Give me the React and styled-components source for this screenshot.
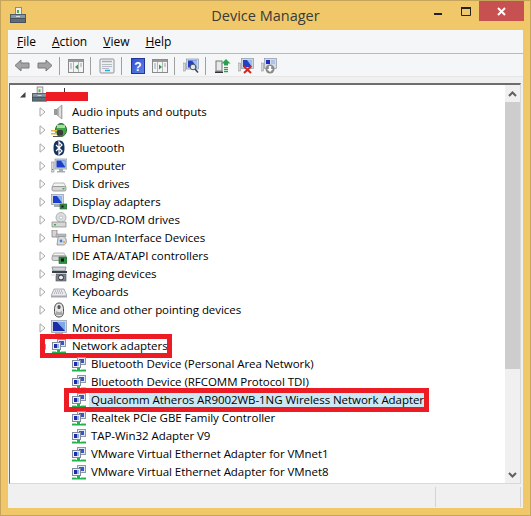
import React from 'react'
import styled, { createGlobalStyle } from 'styled-components'

const Global = createGlobalStyle`
  html, body { margin: 0; padding: 0; background: #f0c869; }
  * { box-sizing: border-box; }
`

const Win = styled.div`
  width: 531px;
  height: 516px;
  display: flex;
  flex-direction: column;
  background: #f0c869;
  border: 1px solid #c4a55b;
  font-family: "Open Sans", "Noto Sans", sans-serif;
  font-size: 11.5px;
  color: #000;
  overflow: hidden;
`

const TitleBar = styled.div`
  height: 29px;
  flex: none;
  display: grid;
  grid-template-columns: 1fr auto 1fr;
  align-items: start;
`

const AppIcon = styled.div`
  margin: 6px 0 0 9px;
  display: flex;
`

const Title = styled.div`
  font-size: 14.5px;
  line-height: 20px;
  margin-top: 5px;
  color: #3a3a3a;
`

const WinButtons = styled.div`
  justify-self: end;
  margin-right: 6px;
  display: flex;
  align-items: flex-start;
`

const WinBtn = styled.div`
  width: ${p => p.$w}px;
  height: 20px;
  display: flex;
  align-items: center;
  justify-content: center;
  background: ${p => p.$close ? '#c75050' : 'transparent'};
`

const Client = styled.div`
  flex: 1;
  margin: 0 7px 7px 7px;
  display: flex;
  flex-direction: column;
  background: #f0f0f0;
  min-height: 0;
`

const MenuBar = styled.div`
  height: 24px;
  flex: none;
  display: flex;
  align-items: center;
  padding-left: 9px;
  gap: 16px;
  background: #f5f6f7;
  border-bottom: 1px solid #b9b9b9;
  font-size: 12px;
  u { text-underline-offset: 1px; }
`

const ToolBar = styled.div`
  height: 22px;
  flex: none;
  display: flex;
  align-items: center;
  padding: 1px 0 0 2px;
  background: #f5f6f7;
`

const ToolBtn = styled.div`
  width: ${p => p.$w || 22}px;
  height: 20px;
  display: flex;
  align-items: center;
  justify-content: center;
`

const Sep = styled.div`
  width: 1px;
  height: 18px;
  background: #a0a0a0;
  margin: 0 5px 0 3px;
`

const Strip = styled.div`
  height: 7px;
  flex: none;
  background: #f0f0f0;
  border-top: 1px solid #e6e6e6;
`

const Body = styled.div`
  flex: 1;
  display: flex;
  min-height: 0;
  margin: 0 2px 0 1px;
  background: #fff;
  border-top: 2px solid #6d6d6d;
  border-left: 1px solid #6d6d6d;
  border-bottom: 1px solid #d9d9d9;
  border-right: 1px solid #d9d9d9;
`

const Tree = styled.div`
  flex: 1;
  overflow: hidden;
  display: flex;
  flex-direction: column;
`

const Row = styled.div`
  height: 18px;
  flex: none;
  display: flex;
  align-items: center;
  padding-left: ${p => p.$indent}px;
  position: relative;
`

const Arrow = styled.div`
  width: 16px;
  height: 18px;
  flex: none;
  padding-right: ${p => p.$nudge || 0}px;
  display: flex;
  align-items: center;
  justify-content: center;
`

const IconSlot = styled.div`
  width: 16px;
  height: 16px;
  flex: none;
  margin-left: ${p => p.$ml || 0}px;
  margin-right: ${p => p.$mr ?? 3}px;
  display: flex;
`

const Label = styled.div`
  white-space: nowrap;
  line-height: 16px;
  padding: 0 2px;
  letter-spacing: -0.05px;
  background: ${p => p.$selected ? '#cce8f4' : 'transparent'};
`

const Mark = styled.div`
  position: absolute;
  left: ${p => p.$left}px;
  top: -3px;
  width: ${p => p.$w}px;
  height: 24px;
  border: 5px solid #ed1c24;
  pointer-events: none;
`

const Redaction = styled.div`
  position: absolute;
  left: 36px;
  top: 7px;
  width: 42px;
  height: 9px;
  background: #ed1c24;
  &::before {
    content: "";
    position: absolute;
    left: 18px;
    top: -4px;
    width: 1px;
    height: 4px;
    background: #333;
  }
`

const Scrollbar = styled.div`
  width: 15px;
  flex: none;
  display: flex;
  flex-direction: column;
  background: #f0f0f0;
`

const ScrollBtn = styled.div`
  height: 17px;
  flex: none;
  display: flex;
  align-items: center;
  justify-content: center;
`

const Thumb = styled.div`
  height: 267px;
  flex: none;
  background: #cdcdcd;
`

const ScrollGap = styled.div`
  flex: 1;
`

const StatusBar = styled.div`
  height: 24px;
  flex: none;
  display: flex;
  padding: 3px 0 1px;
  background: #f0f0f0;
`

const StatusCell = styled.div`
  flex: ${p => p.$grow ? 1 : 'none'};
  width: ${p => p.$w ? p.$w + 'px' : 'auto'};
  border-right: ${p => p.$last ? 'none' : '1px solid #d4d4d4'};
`

const Svg = ({ children, size = 16, w, h }) => (
  <svg width={w || size} height={h || size} viewBox={`0 0 ${w || size} ${h || size}`} style={{ display: 'block' }}>{children}</svg>
)

const NetIcon = () => (
  <Svg>
    <rect x="6.500" y="1.500" width="8" height="7" fill="#dfe8f6" stroke="#8d97a8" />
    <rect x="8" y="3" width="5" height="4" fill="#3a52cc" />
    <rect x="1.500" y="4.500" width="8" height="7" fill="#eef2f8" stroke="#7f8a9c" />
    <rect x="3" y="6" width="5" height="4" fill="#1c2cac" />
    <rect x="6" y="6" width="2" height="4" fill="#8fb0e8" />
    <rect x="6" y="12" width="3" height="2" fill="#22b14c" />
    <rect x="1" y="14" width="14" height="1.500" fill="#22b14c" />
    <path d="M1 13h4v1H1zM10 13h5v1h-5z" fill="#bfc5cc" />
  </Svg>
)

const SpeakerIcon = () => (
  <Svg>
    <rect x="3" y="5" width="3" height="6" fill="#9a9a9a" />
    <path d="M6 5l5-4v14l-5-4z" fill="#b5b5b5" stroke="#8b8b8b" strokeWidth=".6" />
    <path d="M8 4l2-1.500v11L8 12z" fill="#e0e0e0" />
  </Svg>
)

const BatteryIcon = () => (
  <Svg>
    <ellipse cx="10" cy="8" rx="5.500" ry="6.500" fill="#3fa648" stroke="#2e6b34" />
    <path d="M6 3h8v3H6z" fill="#a6dfa0" />
    <rect x="6" y="8" width="6" height="5.500" rx="1.500" fill="#3a3a3a" />
    <path d="M0 8h6v1.500H0zM0 11h6v1.500H0z" fill="#e2b93b" />
    <path d="M2 14h7v1H2z" fill="#555" />
  </Svg>
)

const BluetoothIcon = () => (
  <Svg>
    <path d="M8 .5c4 0 5.500 2.500 5.500 7.500S12 15.500 8 15.500 2.500 13 2.500 8 4 .5 8 .5z" fill="#15315f" />
    <path d="M5 5l6 6-3 3V2l3 3-6 6" fill="none" stroke="#fff" strokeWidth="1.200" />
  </Svg>
)

const ComputerIcon = () => (
  <Svg>
    <rect x="0" y="4" width="3" height="10" fill="#d8d8d8" stroke="#8b8b8b" strokeWidth=".6" />
    <rect x="1" y="11" width="1" height="1" fill="#35a04a" />
    <rect x="4" y="1" width="12" height="10" fill="#cfd6df" stroke="#8e98a6" strokeWidth=".7" />
    <rect x="5.500" y="2.500" width="9" height="7" fill="#1d3fc8" />
    <path d="M10 2.500h4.500v7z" fill="#8fb7ee" />
    <path d="M8 11h4v2H8zM6 13h8v1.500H6z" fill="#a5abb3" />
  </Svg>
)

const DiskIcon = () => (
  <Svg>
    <path d="M3 7h10l2 4H1z" fill="#f2f2f2" stroke="#9c9c9c" strokeWidth=".7" />
    <rect x="1" y="10.500" width="14" height="4.500" rx="1.500" fill="#d6d6d6" stroke="#7f7f7f" strokeWidth=".7" />
    <rect x="11.500" y="12" width="2" height="1.500" fill="#34b24c" />
  </Svg>
)

const DisplayIcon = () => (
  <Svg>
    <rect x="0.500" y="0.500" width="12" height="10" fill="#cfd6df" stroke="#8e98a6" strokeWidth=".7" />
    <rect x="2" y="2" width="9" height="7" fill="#1d3fc8" />
    <path d="M6 2h5v7z" fill="#8fb7ee" />
    <path d="M3 11h8v2H3z" fill="#a5abb3" />
    <rect x="9" y="10" width="7" height="5" fill="#3c8a4a" stroke="#2b5f35" strokeWidth=".6" />
    <rect x="10.500" y="11.500" width="2" height="2" fill="#111" />
  </Svg>
)

const DvdIcon = () => (
  <Svg>
    <circle cx="10" cy="5.500" r="5" fill="#d9dde0" stroke="#9a9a9a" strokeWidth=".7" />
    <circle cx="10" cy="5.500" r="1.500" fill="#fff" stroke="#999" strokeWidth=".5" />
    <path d="M1 10h14v5H1z" fill="#d6d6d6" stroke="#7f7f7f" strokeWidth=".7" />
    <rect x="3" y="12" width="2" height="1.500" fill="#34b24c" />
  </Svg>
)

const HidIcon = () => (
  <Svg>
    <path d="M1 0h5v7H1z" fill="#d6d6d6" stroke="#777" strokeWidth=".7" />
    <path d="M5 4h10v3H5z" fill="#bbb" stroke="#888" strokeWidth=".5" />
    <path d="M7 7c3-1 7-1 8 2s0 6-3 6H6z" fill="#d9dbdf" stroke="#7b7f88" strokeWidth=".7" />
    <circle cx="10" cy="11" r="1.400" fill="#3e7fd0" />
    <circle cx="13" cy="12" r="1" fill="#d8a23a" />
  </Svg>
)

const IdeIcon = () => (
  <Svg>
    <path d="M3 5h10l2 3H1z" fill="#f2f2f2" stroke="#9c9c9c" strokeWidth=".7" />
    <rect x="1" y="8" width="14" height="4.500" rx="1.500" fill="#d6d6d6" stroke="#7f7f7f" strokeWidth=".7" />
    <rect x="8" y="9" width="8" height="6.500" fill="#2f8f44" stroke="#1e5f2e" strokeWidth=".6" />
    <rect x="10" y="10.500" width="3" height="3" fill="#111" />
  </Svg>
)

const ImagingIcon = () => (
  <Svg>
    <path d="M1 1h14l-1 4H2z" fill="#cdd2d8" stroke="#70767e" strokeWidth=".7" />
    <path d="M1 5h15v2H1z" fill="#3b4048" />
    <rect x="5" y="8" width="10" height="7" fill="#7d838b" stroke="#4d5158" strokeWidth=".6" />
    <circle cx="10" cy="11.500" r="2.500" fill="#e8ecf0" stroke="#2a2e33" />
    <path d="M0 8h5v2H0z" fill="#e8e8e8" />
  </Svg>
)

const KeyboardIcon = () => (
  <Svg>
    <path d="M3 5h10l3 7H0z" fill="#e9eaec" stroke="#8c8f95" strokeWidth=".7" />
    <path d="M4 7h8M3 9h10" stroke="#8a8f98" strokeWidth="1" strokeDasharray="1 1" />
    <path d="M0 12h16v1.500H0z" fill="#a5a8ae" />
  </Svg>
)

const MouseIcon = () => (
  <Svg>
    <path d="M8 1c3.500 0 4.500 3 4.500 7s-.5 7-4.500 7-4.500-3-4.500-7S4.500 1 8 1z" fill="#e5e5e5" stroke="#4a4a4a" />
    <rect x="6.500" y="3" width="3" height="4" rx="1.500" fill="#555" />
    <path d="M5 9c2 1.500 4 1.500 6 0v4H5z" fill="#a8a8a8" />
  </Svg>
)

const MonitorIcon = () => (
  <Svg>
    <rect x="0.500" y="0.500" width="15" height="12" fill="#cfd6df" stroke="#8e98a6" strokeWidth=".7" />
    <rect x="2" y="2" width="12" height="9" fill="#1d2fa8" />
    <path d="M6 2h8v9z" fill="#7ea8ea" />
    <path d="M4 13h8v2H4z" fill="#a5abb3" />
  </Svg>
)

const ClippedIcon = () => (
  <Svg>
    <rect x="2" y="1" width="8" height="6" fill="#c9c9c9" />
  </Svg>
)

const ComputerRootIcon = () => (
  <Svg size={17}>
    <rect x="5.500" y="0.500" width="6" height="7" fill="#eee" stroke="#8c8c8c" />
    <path d="M7 3h2v3H7z" fill="#58a848" />
    <rect x="0.500" y="7.500" width="15" height="4" fill="#8896a3" stroke="#4f5b66" />
    <rect x="0.500" y="11.500" width="15" height="4" fill="#5f6d7a" stroke="#46515b" />
    <path d="M6 9h4v1H6z" fill="#d5dbe0" />
  </Svg>
)

const ClosedArrow = () => (
  <Svg w={7} h={10}>
    <path d="M1 .8L6 5l-5 4.200z" fill="#fff" stroke="#a6a6a6" />
  </Svg>
)

const OpenArrow = () => (
  <Svg w={7} h={7}>
    <path d="M6.500 1v5.500H1z" fill="#404040" />
  </Svg>
)

const GreyArrow = ({ flip }) => (
  <Svg w={16} h={13}>
    <path
      d={flip ? 'M1 4h8V1l6 5.500-6 5.500V9H1z' : 'M15 4H7V1L1 6.500 7 12V9h8z'}
      fill="#a3a3a3"
      stroke="#7b7b7b"
    />
  </Svg>
)

const PaneIcon = ({ right }) => (
  <Svg>
    <rect x=".5" y="1.500" width="15" height="13" fill="#f4f4f4" stroke="#8a8a8a" />
    <path d="M1 2h14v2H1z" fill="#9a9a9a" />
    <path d="M5.500 4v10M10.500 4v10" stroke="#b5b5b5" />
    <path d={right ? 'M7 6.500l3 2.500-3 2.500z' : 'M10 6.500l-3 2.500 3 2.500z'} fill="#27a24a" />
    <path d="M2 6h2M2 8h2M2 10h2M12 6h2M12 8h2" stroke="#9aa2ad" />
  </Svg>
)

const PropsIcon = () => (
  <Svg>
    <rect x="1" y="1" width="14" height="14" rx="1" fill="#eef1f4" stroke="#8e9399" />
    <path d="M3 3.500h10" stroke="#a8adb3" strokeWidth="1.500" />
    <path d="M3 6.500h10M3 8.500h10M3 10.500h7" stroke="#b4bac1" />
    <path d="M6 12.500h5" stroke="#29a8e0" strokeWidth="1.500" />
  </Svg>
)

const HelpIcon = () => (
  <svg width="14" height="16" viewBox="0 0 14 16" style={{ display: 'block' }}>
    <defs>
      <linearGradient id="hg" x1="0" y1="0" x2="1" y2="1">
        <stop offset="0" stopColor="#2f4fd0" />
        <stop offset="1" stopColor="#5f86e8" />
      </linearGradient>
    </defs>
    <rect x=".5" y=".5" width="13" height="15" fill="url(#hg)" stroke="#20349a" />
    <text x="7" y="12.500" textAnchor="middle" fontSize="12" fontWeight="700" fontFamily="Liberation Sans" fill="#fff">?</text>
  </svg>
)

const ScanIcon = () => (
  <Svg>
    <rect x="0" y="5" width="2.500" height="8" fill="#d4d4d4" stroke="#888" strokeWidth=".5" />
    <rect x="3.500" y="1" width="12" height="10" fill="#cfd6df" stroke="#8e98a6" strokeWidth=".7" />
    <rect x="5" y="2.500" width="9" height="7" fill="#2440c4" />
    <path d="M9 2.500h5v7z" fill="#9cbdf0" />
    <circle cx="10" cy="9" r="2.800" fill="#dce8f5" stroke="#555" />
    <path d="M12 11l3 3.500" stroke="#444" strokeWidth="1.500" />
  </Svg>
)

const UpdateIcon = () => (
  <Svg>
    <rect x="1" y="3" width="6" height="10" fill="#e8e8e8" stroke="#777" />
    <path d="M0 13.500h8V15H0z" fill="#333" />
    <path d="M11 1l4.500 4.500H13v2H9v-2H6.500z" fill="#2aa24a" />
    <path d="M9 9h4v1.200H9zM9 11h4v1.200H9zM9 13h4v1.200H9z" fill="#2aa24a" />
  </Svg>
)

const DisableIcon = () => (
  <Svg>
    <rect x="0" y="5" width="2.500" height="8" fill="#d4d4d4" stroke="#888" strokeWidth=".5" />
    <rect x="3.500" y="0.500" width="12" height="10" fill="#cfd6df" stroke="#8e98a6" strokeWidth=".7" />
    <rect x="5" y="2" width="9" height="7" fill="#2440c4" />
    <path d="M9 2h5v7z" fill="#9cbdf0" />
    <path d="M6 8.500l7 6.500M13 8.500l-7 6.500" stroke="#d9261c" strokeWidth="2" />
  </Svg>
)

const InstallIcon = () => (
  <Svg>
    <rect x="0" y="5" width="2.500" height="8" fill="#d4d4d4" stroke="#888" strokeWidth=".5" />
    <rect x="3.500" y="0.500" width="12" height="10" fill="#d3dceb" stroke="#8e98a6" strokeWidth=".7" />
    <rect x="5" y="2" width="4" height="4" fill="#1f2fc0" />
    <path d="M10 3h4M10 5h4" stroke="#8fa8e0" />
    <circle cx="9" cy="11" r="4.500" fill="#8a8a8a" />
    <path d="M7.800 8h2.400v3H12l-3 3-3-3h1.800z" fill="#fff" />
  </Svg>
)

const SmallChevron = ({ down }) => (
  <Svg w={9} h={6}>
    <path d={down ? 'M1 1l3.500 3.500L8 1' : 'M1 5l3.500-3.500L8 5'} fill="none" stroke="#606060" strokeWidth="2" />
  </Svg>
)

const devices = [
  ['Audio inputs and outputs', SpeakerIcon],
  ['Batteries', BatteryIcon],
  ['Bluetooth', BluetoothIcon],
  ['Computer', ComputerIcon],
  ['Disk drives', DiskIcon],
  ['Display adapters', DisplayIcon],
  ['DVD/CD-ROM drives', DvdIcon],
  ['Human Interface Devices', HidIcon],
  ['IDE ATA/ATAPI controllers', IdeIcon],
  ['Imaging devices', ImagingIcon],
  ['Keyboards', KeyboardIcon],
  ['Mice and other pointing devices', MouseIcon],
  ['Monitors', MonitorIcon],
]

const adapters = [
  'Bluetooth Device (Personal Area Network)',
  'Bluetooth Device (RFCOMM Protocol TDI)',
  'Qualcomm Atheros AR9002WB-1NG Wireless Network Adapter',
  'Realtek PCIe GBE Family Controller',
  'TAP-Win32 Adapter V9',
  'VMware Virtual Ethernet Adapter for VMnet1',
  'VMware Virtual Ethernet Adapter for VMnet8',
]

export default function App() {
  return (
    <Win>
      <Global />
      <TitleBar>
        <AppIcon><ComputerRootIcon /></AppIcon>
        <Title>Device Manager</Title>
        <WinButtons>
          <WinBtn $w={30}>
            <Svg w={9} h={9}><rect width="8" height="2" y="6" fill="#222" /></Svg>
          </WinBtn>
          <WinBtn $w={26}>
            <Svg w={11} h={9}><path d="M.5 1.500h9v7h-9z" fill="none" stroke="#222" /><path d="M0 0h10v2H0z" fill="#222" /></Svg>
          </WinBtn>
          <WinBtn $w={45} $close>
            <Svg w={9} h={9}><path d="M1 1l7 7M8 1L1 8" stroke="#fff" strokeWidth="2" /></Svg>
          </WinBtn>
        </WinButtons>
      </TitleBar>
      <Client>
        <MenuBar>
          <span><u>F</u>ile</span>
          <span><u>A</u>ction</span>
          <span><u>V</u>iew</span>
          <span><u>H</u>elp</span>
        </MenuBar>
        <ToolBar>
          <ToolBtn $w={23}><GreyArrow /></ToolBtn>
          <ToolBtn $w={23}><GreyArrow flip /></ToolBtn>
          <Sep />
          <ToolBtn><PaneIcon /></ToolBtn>
          <Sep />
          <ToolBtn><PropsIcon /></ToolBtn>
          <Sep />
          <ToolBtn><HelpIcon /></ToolBtn>
          <ToolBtn><PaneIcon right /></ToolBtn>
          <Sep />
          <ToolBtn><ScanIcon /></ToolBtn>
          <Sep />
          <ToolBtn $w={23}><UpdateIcon /></ToolBtn>
          <ToolBtn $w={23}><DisableIcon /></ToolBtn>
          <ToolBtn $w={23}><InstallIcon /></ToolBtn>
        </ToolBar>
        <Strip />
        <Body>
          <Tree>
            <Row $indent={4}>
              <Arrow><OpenArrow /></Arrow>
              <IconSlot $ml={2}><ComputerRootIcon /></IconSlot>
              <Redaction />
            </Row>
            {devices.map(([name, Icon]) => (
              <Row key={name} $indent={25}>
                <Arrow $nudge={2}><ClosedArrow /></Arrow>
                <IconSlot><Icon /></IconSlot>
                <Label>{name}</Label>
              </Row>
            ))}
            <Row $indent={25}>
              <Arrow $nudge={2}><OpenArrow /></Arrow>
              <IconSlot><NetIcon /></IconSlot>
              <Label>Network adapters</Label>
              <Mark $left={30} $w={132} />
            </Row>
            {adapters.map(name => {
              const selected = name.startsWith('Qualcomm')
              return (
                <Row key={name} $indent={61}>
                  <IconSlot $mr={2}><NetIcon /></IconSlot>
                  <Label $selected={selected}>{name}</Label>
                  {selected && <Mark $left={54} $w={365} />}
                </Row>
              )
            })}
            <Row $indent={41}>
              <IconSlot><ClippedIcon /></IconSlot>
            </Row>
          </Tree>
          <Scrollbar>
            <ScrollBtn><SmallChevron /></ScrollBtn>
            <Thumb />
            <ScrollGap />
            <ScrollBtn><SmallChevron down /></ScrollBtn>
          </Scrollbar>
        </Body>
        <StatusBar>
          <StatusCell $grow />
          <StatusCell $w={85} />
          <StatusCell $w={2} $last />
        </StatusBar>
      </Client>
    </Win>
  )
}
